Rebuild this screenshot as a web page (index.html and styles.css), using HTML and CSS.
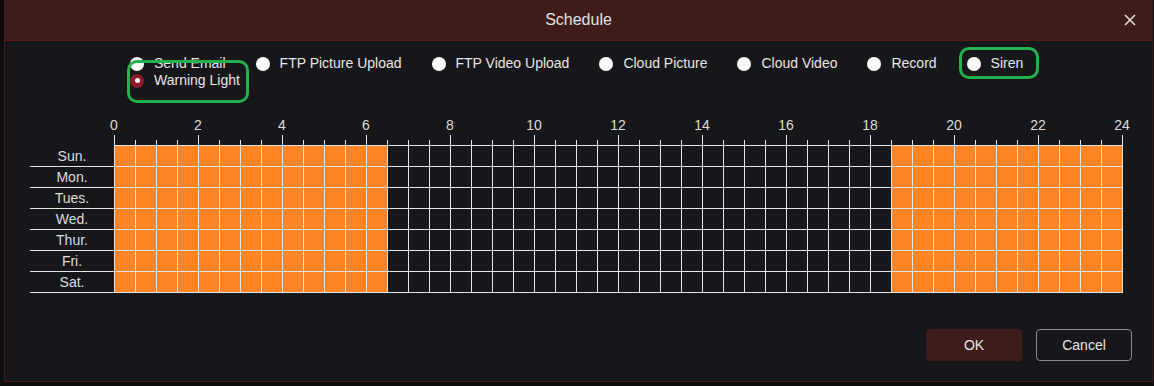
FILE: index.html
```html
<!DOCTYPE html>
<html lang="en">
<head>
<meta charset="utf-8">
<title>Schedule</title>
<link rel="stylesheet" href="styles.css">
</head>
<body>
<div class="dialog">
  <div class="header">
    <span class="title">Schedule</span>
    <button class="close" aria-label="Close">
      <svg width="12" height="12" viewBox="0 0 12 12"><path d="M1 1L11 11M11 1L1 11" stroke="#e2e2e2" stroke-width="1.5" fill="none"/></svg>
    </button>
  </div>
  <div class="body">
    <div class="options">
      <label class="option"><span class="radio"></span>Send Email</label>
      <label class="option"><span class="radio"></span>FTP Picture Upload</label>
      <label class="option"><span class="radio"></span>FTP Video Upload</label>
      <label class="option"><span class="radio"></span>Cloud Picture</label>
      <label class="option"><span class="radio"></span>Cloud Video</label>
      <label class="option"><span class="radio"></span>Record</label>
      <label class="option"><span class="radio"></span>Siren</label>
      <label class="option"><span class="radio checked"></span>Warning Light</label>
    </div>
    <div class="schedule">
      <div class="axis">
        <div class="hours">
          <span>0</span><span>2</span><span>4</span><span>6</span><span>8</span><span>10</span><span>12</span><span>14</span><span>16</span><span>18</span><span>20</span><span>22</span><span>24</span>
        </div>
        <div class="ticks"></div>
      </div>
      <div class="table">
        <div class="days">
          <div class="day">Sun.</div>
          <div class="day">Mon.</div>
          <div class="day">Tues.</div>
          <div class="day">Wed.</div>
          <div class="day">Thur.</div>
          <div class="day">Fri.</div>
          <div class="day">Sat.</div>
        </div>
        <div class="grid"></div>
      </div>
    </div>
    <div class="footer">
      <button class="btn ok">OK</button>
      <button class="btn cancel">Cancel</button>
    </div>
  </div>
  <div class="mark mark-warning"></div>
  <div class="mark mark-siren"></div>
</div>
</body>
</html>
```
FILE: styles.css
```css
html, body {
  margin: 0;
  padding: 0;
}
body {
  background: #0d0d0f;
  font-family: "Liberation Sans", Arial, sans-serif;
  font-size: 14px;
  color: #e4e4e4;
  width: 1154px;
  height: 386px;
  overflow: hidden;
}
.dialog {
  position: relative;
  margin-left: 4px;
  width: 1149px;
  box-sizing: border-box;
  background: #16171b;
  border: 1px solid #461c1a;
  border-top: 0;
}
.header {
  height: 40px;
  background: #3d1c1a;
  border-bottom: 1px solid #5a1d1b;
  display: grid;
  grid-template-columns: 1fr auto 1fr;
  align-items: center;
}
.title {
  grid-column: 2;
  font-size: 16px;
  color: #e2e2e2;
}
.close {
  grid-column: 3;
  justify-self: end;
  margin-right: 14px;
  width: 16px;
  height: 16px;
  padding: 0;
  border: 0;
  background: transparent;
  display: flex;
  align-items: center;
  justify-content: center;
}
.body {
  padding: 14px 20px 20px 0;
}
.options {
  margin-left: 125px;
  width: 960px;
  display: flex;
  flex-wrap: wrap;
  column-gap: 30px;
}
.option {
  display: flex;
  align-items: center;
  height: 17px;
  line-height: 17px;
  color: #e6e6e6;
  white-space: nowrap;
}
.radio {
  width: 14px;
  height: 14px;
  border-radius: 50%;
  background: #ffffff;
  margin-right: 10px;
  box-sizing: border-box;
  display: flex;
  align-items: center;
  justify-content: center;
}
.radio.checked {
  background: #8c1b2b;
}
.radio.checked::after {
  content: "";
  width: 5px;
  height: 5px;
  border-radius: 50%;
  background: #ffffff;
}
.schedule {
  margin-top: 26px;
  margin-left: 25px;
}
.axis {
  margin-left: 84px;
}
.hours {
  display: flex;
  margin-left: -42px;
  height: 20px;
}
.hours span {
  flex: 0 0 84px;
  text-align: center;
  line-height: 20px;
  color: #dcdcdc;
}
.ticks {
  width: 1009px;
  height: 10px;
  background:
    repeating-linear-gradient(to right, #e3e3e3 0 1px, transparent 1px 84px) left top / 1009px 10px no-repeat,
    repeating-linear-gradient(to right, #e3e3e3 0 1px, transparent 1px 21px) left bottom / 1009px 5px no-repeat;
}
.table {
  display: flex;
}
.days {
  width: 84px;
  padding-top: 1px;
}
.day {
  height: 20px;
  line-height: 20px;
  border-bottom: 1px solid #e3e3e3;
  text-align: center;
  color: #dcdcdc;
}
.grid {
  width: 1009px;
  height: 148px;
  background:
    repeating-linear-gradient(to right, #e3e3e3 0 1px, transparent 1px 21px),
    repeating-linear-gradient(to bottom, #e3e3e3 0 1px, transparent 1px 21px),
    linear-gradient(to right, #ff8424 0 273px, transparent 273px 777px, #ff8424 777px 100%);
}
.footer {
  margin-top: 36px;
  display: flex;
  justify-content: flex-end;
  gap: 14px;
}
.btn {
  width: 96px;
  height: 32px;
  font-family: inherit;
  font-size: 14px;
  border-radius: 4px;
  color: #e6e6e6;
  padding: 0;
}
.ok {
  background: #3d1c1a;
  border: 0;
}
.cancel {
  background: transparent;
  border: 1px solid #8a8a8a;
}
.mark {
  position: absolute;
  border: 3px solid #23b24b;
  border-radius: 10px;
  box-sizing: border-box;
}
.mark-warning {
  left: 122px;
  top: 60px;
  width: 122px;
  height: 43px;
}
.mark-siren {
  left: 954px;
  top: 47px;
  width: 80px;
  height: 32px;
}
```
